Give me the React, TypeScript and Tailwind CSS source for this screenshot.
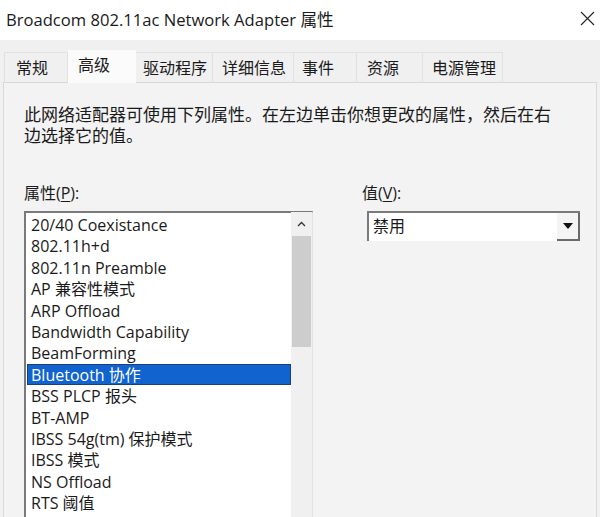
const tabs = [
  { label: "常规", w: 64, pl: 11 },
  { label: "高级", w: 68, pl: 10, active: true },
  { label: "驱动程序", w: 77, pl: 7 },
  { label: "详细信息", w: 81, pl: 9 },
  { label: "事件", w: 63, pl: 8 },
  { label: "资源", w: 66, pl: 10 },
  { label: "电源管理", w: 80, pl: 9 },
];

const items = [
  "20/40 Coexistance",
  "802.11h+d",
  "802.11n Preamble",
  "AP 兼容性模式",
  "ARP Offload",
  "Bandwidth Capability",
  "BeamForming",
  "Bluetooth 协作",
  "BSS PLCP 报头",
  "BT-AMP",
  "IBSS 54g(tm) 保护模式",
  "IBSS 模式",
  "NS Offload",
  "RTS 阈值",
];

const selected = 7;

export default function App() {
  return (
    <div className="w-[600px] h-[517px] overflow-hidden bg-[#f0f0f0] text-[#1a1a1a] font-['Open_Sans','Noto_Sans_CJK_SC',sans-serif]">
      {/* title bar */}
      <div className="flex h-[40px] items-center justify-between bg-white pl-[6px] pr-[3px]">
        <span className="text-[16.6px] leading-none">Broadcom 802.11ac Network Adapter 属性</span>
        <svg width="15" height="15" viewBox="0 0 15 15" className="mr-[2px] -mt-[3px]">
          <path d="M1 1 L14 14 M14 1 L1 14" stroke="#222" strokeWidth="1.1" />
        </svg>
      </div>

      {/* tabs */}
      <div className="flex h-[32px] items-end pl-[4px] mt-[10px]">
        {tabs.map((t, i) => (
          <div
            key={t.label}
            style={{ width: t.w, paddingLeft: t.pl }}
            className={
              t.active
                ? "relative z-10 flex h-[33px] items-center bg-[#fbfbfb] pb-[4px] text-[16px] -mb-px"
                : i === 0
                  ? "flex h-[30px] items-center border-l border-r border-t border-[#e2e2e2] bg-[#f0f0f0] pt-[1px] text-[16px]"
                  : "flex h-[30px] items-center border-r border-t border-[#e2e2e2] bg-[#f0f0f0] pt-[1px] text-[16px]"
            }
          >
            {t.label}
          </div>
        ))}
      </div>

      {/* panel */}
      <div className="mx-[3px] h-[440px] border border-[#d9d9d9] bg-[#f3f3f3] pl-[20px] pt-[21px]">
        <p className="text-[17px] leading-[21px] w-[540px]">
          此网络适配器可使用下列属性。在左边单击你想更改的属性，然后在右边选择它的值。
        </p>

        <div className="mt-[37px] flex">
          {/* left column */}
          <div className="w-[338px]">
            <div className="text-[16px] leading-[21px]">
              属性(<span className="underline underline-offset-2">P</span>):
            </div>
            <div className="mt-[7px] flex h-[320px] w-[289px] border-l-2 border-t-2 border-[#7a7a7a] border-r border-r-[#e3e3e3] bg-white">
              <div className="flex-1 pl-[1px] pt-[1px]">
                {items.map((it, i) => (
                  <div
                    key={it}
                    className={
                      i === selected
                        ? "h-[21.4px] border border-[#1d3f78] bg-[#1163cf] pl-[3px] pt-[1px] text-[16px] leading-[19px] text-white"
                        : "h-[21.4px] pl-[4px] pt-[1px] text-[16px] leading-[21px]"
                    }
                  >
                    {it}
                  </div>
                ))}
              </div>
              <div className="-mt-[1px] flex w-[21px] flex-col bg-[#f0f0f0]">
                <div className="flex h-[24px] items-center justify-center">
                  <svg width="9" height="6" viewBox="0 0 9 6">
                    <path d="M1 5 L4.5 1.5 L8 5" fill="none" stroke="#333" strokeWidth="1.3" />
                  </svg>
                </div>
                <div className="mx-[1px] h-[111px] bg-[#cdcdcd]" />
              </div>
            </div>
          </div>

          {/* right column */}
          <div>
            <div className="text-[16px] leading-[21px]">
              值(<span className="underline underline-offset-2">V</span>):
            </div>
            <div className="mt-[7px] ml-[5px] flex h-[30px] w-[213px] border-l-2 border-t-2 border-[#7a7a7a] bg-white">
              <div className="flex-1 pl-[4px] text-[16px] leading-[27px]">禁用</div>
              <div className="flex w-[23px] items-center justify-center border-b-2 border-r-2 border-[#6a6a6a] bg-[#f4f4f4]">
                <svg width="10" height="6" viewBox="0 0 10 6">
                  <path d="M0 0 H10 L5 6 Z" fill="#111" />
                </svg>
              </div>
            </div>
          </div>
        </div>
      </div>
    </div>
  );
}
